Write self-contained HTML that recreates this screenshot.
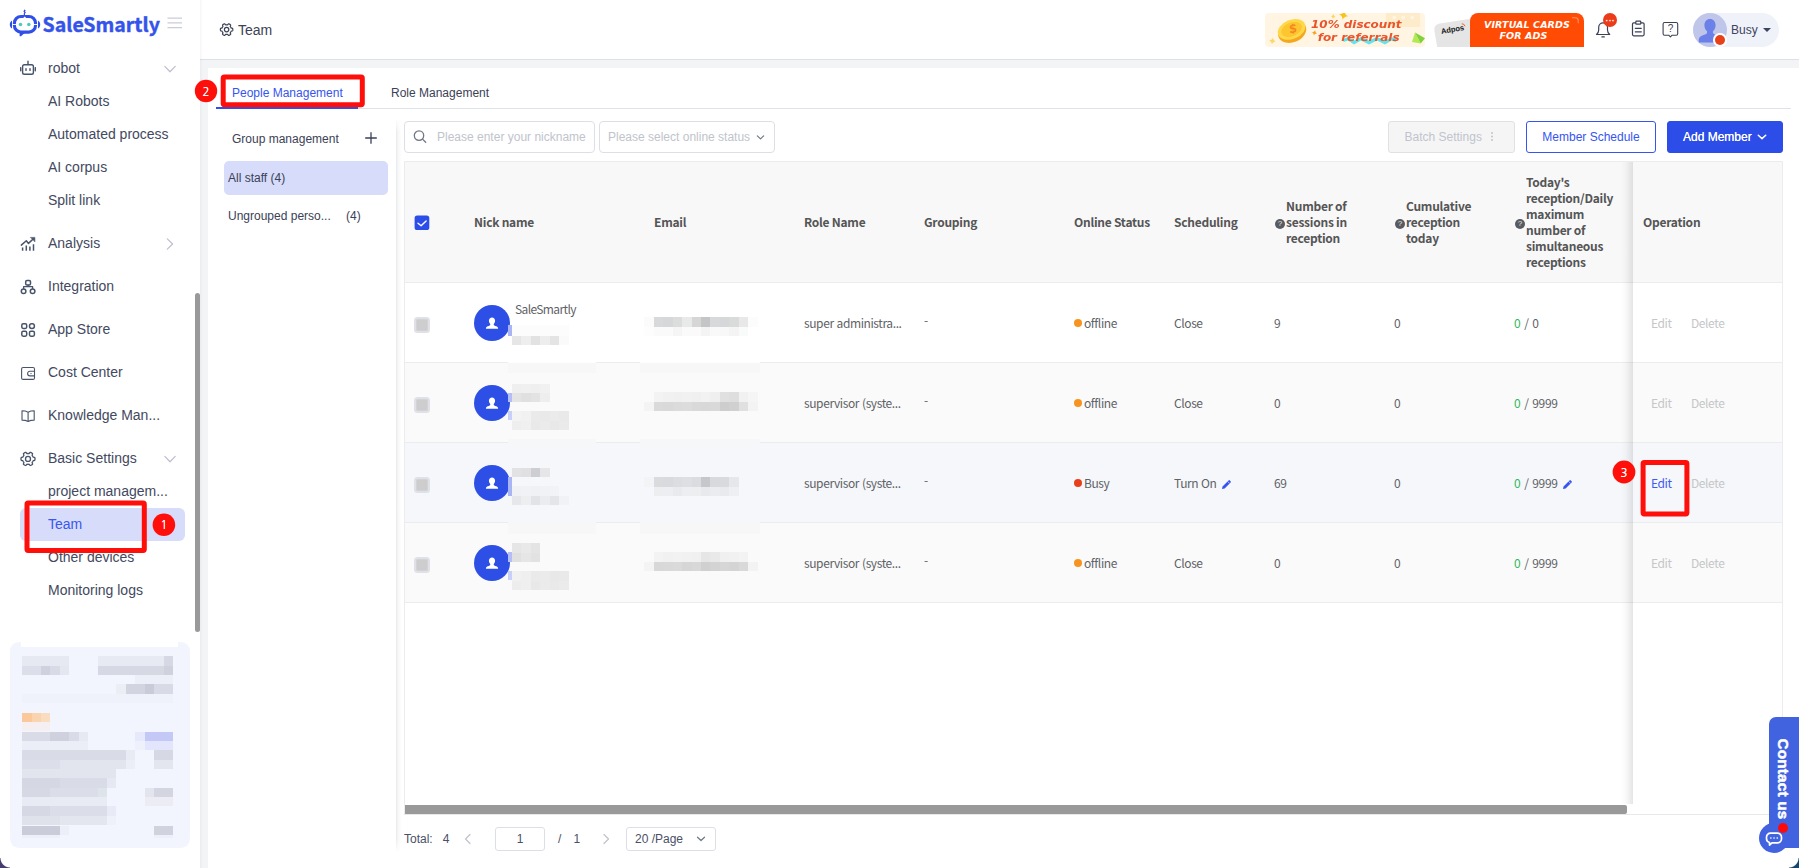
<!DOCTYPE html>
<html lang="en"><head><meta charset="utf-8"><title>Team - SaleSmartly</title>
<style>
*{box-sizing:border-box;margin:0;padding:0}
html,body{width:1799px;height:868px;overflow:hidden;background:#fff}
body{position:relative;font-family:"Liberation Sans",sans-serif;font-size:12px;color:#3b4157}
.a{position:absolute}
svg{display:block;overflow:visible}
/* ---------- sidebar ---------- */
#side{position:absolute;left:0;top:0;width:200px;height:868px;background:#fff}
#logo-t{position:absolute;left:42px;top:10px;transform:translateY(.5px);font:700 19.5px/28px "Noto Sans CJK SC","Liberation Sans",sans-serif;color:#3353ea;white-space:nowrap;-webkit-text-stroke:.4px #3353ea}
.mi{position:absolute;left:48px;height:20px;line-height:20px;font-size:14px;color:#424960;white-space:nowrap}
.ic{position:absolute;left:18px;width:20px;height:20px}
.chev{position:absolute;left:163px;width:14px;height:14px}
#act{position:absolute;left:20px;top:508px;width:165px;height:33px;border-radius:6px;background:#d6dcfa}
.num{position:absolute;width:23px;height:23px;color:#fff;font:11.5px/25.6px "NanumGothic","Liberation Sans",sans-serif;text-align:center;text-shadow:0 0 .6px #fff}
#sbar{position:absolute;left:195px;top:293px;width:5px;height:339px;border-radius:3px;background:#999}
#card{position:absolute;left:10px;top:642px;width:180px;height:206px;border-radius:9px;background:#f3f5fe;overflow:hidden}
#card i{position:absolute;display:block}
/* ---------- header ---------- */
#hdr{position:absolute;left:200px;top:0;width:1599px;height:60px;background:#fff;border-bottom:1px solid #dde0e6}
#gap{position:absolute;left:200px;top:60px;width:1599px;height:808px;background:#f3f4f6}
#gapsh{position:absolute;left:200px;top:0;width:3px;height:868px;background:linear-gradient(90deg,rgba(40,50,80,.045),rgba(40,50,80,0))}
#panel{position:absolute;left:208px;top:68px;width:1591px;height:800px;background:#fff}
#ttl{position:absolute;left:238px;top:20px;font-size:14px;line-height:20px;color:#3d4254}
/* ---------- tabs / toolbar ---------- */
.t12{position:absolute;font-size:12px;line-height:16px;white-space:nowrap}
.inp{position:absolute;height:32px;border:1px solid #dcdfe6;border-radius:4px;background:#fff}
.btn{position:absolute;top:121px;height:32px;border-radius:3px;border:1px solid;font-size:12px;line-height:30px;text-align:center;white-space:nowrap}
/* ---------- table ---------- */
#tbl{position:absolute;left:404px;top:161px;width:1379px;height:654px;background:#fff;font-family:"Noto Sans CJK SC","Liberation Sans",sans-serif;font-size:12px;color:#5a5e66}
#thead{position:absolute;left:0;top:0;width:1379px;height:122px;background:#f8f8f9;border-bottom:1px solid #ebecf0}
.th{position:absolute;font-weight:700;font-size:12px;line-height:16px;color:#555;letter-spacing:-.25px;white-space:nowrap}
.row{position:absolute;left:0;width:1379px;height:80px;border-bottom:1px solid #ebecf0}
.td{position:absolute;top:31px;font-size:12px;line-height:18px;white-space:nowrap;letter-spacing:-.4px;word-spacing:.6px;color:#606266}
.cb{position:absolute;left:10px;top:34px;width:16px;height:16px;border-radius:3.5px;background:#cdcdcd;border:2px solid #dfe1e8;box-shadow:inset 0 0 0 .6px #d6d7dc}
.av{position:absolute;left:70px;top:22px;width:36px;height:36px;border-radius:50%;background:#2d4fe6}
.dot{position:absolute;left:670px;top:36px;width:8px;height:8px;border-radius:50%}
.q{position:absolute;width:10px;height:10px;border-radius:50%;background:#595b60;color:#e4e4e6;font:400 8px/10.5px "Liberation Sans",sans-serif;text-align:center}
.mz{position:absolute}
#fix{position:absolute;left:1229px;top:0;width:149px;height:643px}
#fixsh{position:absolute;left:1217px;top:0;width:12px;height:643px;background:linear-gradient(90deg,rgba(0,0,0,0),rgba(0,0,0,.025) 40%,rgba(0,0,0,.10))}
</style>
</head><body>
<div id="gap"></div><div id="panel"></div>
<div class="a" style="left:216px;top:108px;width:1575px;height:1px;background:#dfe2e8"></div>
<div class="a" style="left:216px;top:107px;width:142px;height:2px;background:#2f4fe8"></div>
<div class="t12" style="left:232px;top:85px;color:#3555ee">People Management</div>
<div class="t12" style="left:391px;top:85px;color:#3b4157">Role Management</div>
<div class="t12" style="left:232px;top:131px;color:#3b4157">Group management</div>
<svg class="a" style="left:364px;top:131px" width="14" height="14" viewBox="0 0 14 14"><path d="M7 1.2v11.6M1.2 7h11.6" stroke="#3b4157" stroke-width="1.3" fill="none"/></svg>
<div class="a" style="left:224px;top:161px;width:164px;height:34px;border-radius:5px;background:#d6dcfa"></div>
<div class="t12" style="left:228px;top:170px;color:#3b4157">All staff (4)</div>
<div class="t12" style="left:228px;top:208px;color:#3b4157">Ungrouped perso...</div>
<div class="t12" style="left:346px;top:208px;color:#3b4157">(4)</div>
<div class="a" style="left:396px;top:118px;width:6px;height:735px;background:linear-gradient(90deg,rgba(30,40,70,.10),rgba(30,40,70,.035) 35%,rgba(30,40,70,0));-webkit-mask-image:linear-gradient(180deg,transparent,#000 14px,#000 98%,transparent);mask-image:linear-gradient(180deg,transparent,#000 14px,#000 98%,transparent)"></div>
<div class="inp" style="left:404px;top:121px;width:191px"></div>
<svg class="a" style="left:412px;top:128px" width="16" height="16" viewBox="0 0 16 16" fill="none" stroke="#6f7687" stroke-width="1.3" stroke-linecap="round"><circle cx="7" cy="7.6" r="4.7"/><path d="M10.5 11.1l3.2 3.2"/></svg>
<div class="t12" style="left:437px;top:129px;color:#c0c4cc">Please enter your nickname</div>
<div class="inp" style="left:599px;top:121px;width:176px"></div>
<div class="t12" style="left:608px;top:129px;color:#c0c4cc">Please select online status</div>
<svg class="a" style="left:755.5px;top:132.5px" width="9" height="9" viewBox="0 0 10 10" fill="none" stroke="#6f7687" stroke-width="1.3" stroke-linecap="round" stroke-linejoin="round"><path d="M1.5 3.2l3.5 3.3 3.5-3.3"/></svg>
<div class="btn" style="left:1388px;width:127px;background:#f5f5f6;border-color:#e0e1e4;color:#c0c4cc;text-align:left;padding-left:15.5px">Batch Settings</div>
<div class="a" style="left:1491px;top:131.5px;width:2px;height:2px;border-radius:1px;background:#c0c4cc;box-shadow:0 3.5px 0 #c0c4cc,0 7px 0 #c0c4cc"></div>
<div class="btn" style="left:1526px;width:130px;background:#fff;border-color:#3555ee;color:#3555ee">Member Schedule</div>
<div class="btn" style="left:1667px;width:116px;background:#2d4de8;border-color:#2d4de8;color:#fff;text-align:left;padding-left:15px;text-shadow:0 0 .4px #fff">Add Member</div>
<svg class="a" style="left:1757px;top:132px" width="10" height="10" viewBox="0 0 10 10" fill="none" stroke="#fff" stroke-width="1.5" stroke-linecap="round" stroke-linejoin="round"><path d="M1.3 3.2l3.7 3.4 3.7-3.4"/></svg><div id="hdr"></div>
<svg class="a" style="left:0;top:0" width="1799" height="60" viewBox="0 0 1799 60" fill="none" stroke="#3d4254" stroke-width="1.2" stroke-linejoin="round" stroke-linecap="round">
<path d="M233.2 30 L233.19 30.27 L233.18 30.54 L233.15 30.81 L233.11 31.08 L232.87 31.3 L232.31 31.42 L231.76 31.5 L231.51 31.64 L231.43 31.84 L231.35 32.03 L231.26 32.22 L231.16 32.4 L231.05 32.58 L230.93 32.75 L230.81 32.92 L230.68 33.09 L230.68 33.37 L230.89 33.89 L231.06 34.43 L230.99 34.75 L230.77 34.92 L230.56 35.08 L230.33 35.23 L230.1 35.37 L229.86 35.5 L229.62 35.62 L229.37 35.73 L229.12 35.83 L228.81 35.73 L228.42 35.31 L228.08 34.87 L227.83 34.73 L227.63 34.76 L227.42 34.78 L227.21 34.8 L227 34.8 L226.79 34.8 L226.58 34.78 L226.37 34.76 L226.17 34.73 L225.92 34.87 L225.58 35.31 L225.19 35.73 L224.88 35.83 L224.63 35.73 L224.38 35.62 L224.14 35.5 L223.9 35.37 L223.67 35.23 L223.44 35.08 L223.23 34.92 L223.01 34.75 L222.94 34.43 L223.11 33.89 L223.32 33.37 L223.32 33.09 L223.19 32.92 L223.07 32.75 L222.95 32.58 L222.84 32.4 L222.74 32.22 L222.65 32.03 L222.57 31.84 L222.49 31.64 L222.24 31.5 L221.69 31.42 L221.13 31.3 L220.89 31.08 L220.85 30.81 L220.82 30.54 L220.81 30.27 L220.8 30 L220.81 29.73 L220.82 29.46 L220.85 29.19 L220.89 28.92 L221.13 28.7 L221.69 28.58 L222.24 28.5 L222.49 28.36 L222.57 28.16 L222.65 27.97 L222.74 27.78 L222.84 27.6 L222.95 27.42 L223.07 27.25 L223.19 27.08 L223.32 26.91 L223.32 26.63 L223.11 26.11 L222.94 25.57 L223.01 25.25 L223.23 25.08 L223.44 24.92 L223.67 24.77 L223.9 24.63 L224.14 24.5 L224.38 24.38 L224.63 24.27 L224.88 24.17 L225.19 24.27 L225.58 24.69 L225.92 25.13 L226.17 25.27 L226.37 25.24 L226.58 25.22 L226.79 25.2 L227 25.2 L227.21 25.2 L227.42 25.22 L227.63 25.24 L227.83 25.27 L228.08 25.13 L228.42 24.69 L228.81 24.27 L229.12 24.17 L229.37 24.27 L229.62 24.38 L229.86 24.5 L230.1 24.63 L230.33 24.77 L230.56 24.92 L230.77 25.08 L230.99 25.25 L231.06 25.57 L230.89 26.11 L230.68 26.63 L230.68 26.91 L230.81 27.08 L230.93 27.25 L231.05 27.42 L231.16 27.6 L231.26 27.78 L231.35 27.97 L231.43 28.16 L231.51 28.36 L231.76 28.5 L232.31 28.58 L232.87 28.7 L233.11 28.92 L233.15 29.19 L233.18 29.46 L233.19 29.73Z" transform="translate(-.4 -.4)"/><circle cx="226.6" cy="29.6" r="2.2"/>
</svg>
<div id="ttl">Team</div>
<div class="a" style="left:1265px;top:13px;width:160px;height:34px;border-radius:4px;background:#fff5e2;overflow:hidden">
<div class="a" style="left:121px;top:0;width:34px;height:13.5px;background:#fdebc9"></div>
<svg class="a" style="left:0;top:0" width="160" height="34" viewBox="0 0 160 34">
<circle cx="129.2" cy="4.5" r="2" fill="#fff5e0"/><circle cx="138.2" cy="4.5" r="2" fill="#fff5e0"/><circle cx="147.2" cy="4.5" r="2" fill="#fff5e0"/>
<ellipse cx="27.2" cy="18.8" rx="14.6" ry="10.4" fill="#f3a81f" transform="rotate(-22 27.2 18.8)"/>
<ellipse cx="26.6" cy="16.4" rx="14.4" ry="9.6" fill="#ffd84a" transform="rotate(-22 26.6 16.4)"/>
<ellipse cx="26.6" cy="16.4" rx="10.8" ry="6.8" fill="#fdc52f" transform="rotate(-22 26.6 16.4)"/>
<path transform="rotate(12 78.6 2.3)" d="M78.6 -2.3Q79.428 1.472 83.19999999999999 2.3Q79.428 3.1279999999999997 78.6 6.8999999999999995Q77.77199999999999 3.1279999999999997 74 2.3Q77.77199999999999 1.472 78.6 -2.3Z" fill="#f9c31f"/><path transform="rotate(10 68.3 3.6)" d="M68.3 1.3000000000000003Q68.714 3.186 70.6 3.6Q68.714 4.014 68.3 5.9Q67.886 4.014 66 3.6Q67.886 3.186 68.3 1.3000000000000003Z" fill="#fbd35a"/><path transform="rotate(15 49.5 19.8)" d="M49.5 17.2Q49.968 19.332 52.1 19.8Q49.968 20.268 49.5 22.400000000000002Q49.032 20.268 46.9 19.8Q49.032 19.332 49.5 17.2Z" fill="#f9a11a"/><path transform="rotate(10 7.4 28)" d="M7.4 24.8Q7.976 27.424 10.600000000000001 28Q7.976 28.576 7.4 31.2Q6.824000000000001 28.576 4.2 28Q6.824000000000001 27.424 7.4 24.8Z" fill="#fbd668"/>
<path d="M78.5 26l4.5-2 6 3.5 7-3.5 8 3.5 8-3.5 8 3.5 6.5-3.5 4.5 2v3l-4.5-1.5-6.5 4-8-4-8 4-8-4-7 4-6-4-4.5 1.5z" fill="#5ce6f2"/>
<path d="M150 19.4l-3 9.6 8.7 1.4z" fill="#b4e855"/><path d="M150 19.4l10 5.9-4.3 5.1z" fill="#7fd23b"/>
</svg>
<div class="a" style="left:22px;top:8.5px;width:12px;text-align:center;font:italic 700 12.5px/14px 'Liberation Sans',sans-serif;color:#f5851c;transform:rotate(-14deg)">$</div>
<div class="a" style="left:46px;top:5px;width:92px;font:italic 700 9.8px/13.2px 'DejaVu Sans','Liberation Sans',sans-serif;color:#e8542c;white-space:nowrap;transform:scaleX(1.22);transform-origin:0 0"><div style="margin-left:0">10% discount</div><div style="margin-left:5.5px">for referrals</div></div>
</div>
<svg class="a" style="left:1432px;top:11px" width="154" height="38" viewBox="1432 11 154 38">
<path d="M1437.2 47l-2.8-16q-.8-6.3 5.2-7.4l31.4-4.8v28.2z" fill="#e5e5e5"/>
<path d="M1470 47v-26a8 8 0 0 1 8-8h98a8 8 0 0 1 8 8v26z" fill="#ff4b04"/>
<path d="M1572 17.8h3.4a2.8 2.8 0 0 1 2.8 2.8v2.7" fill="none" stroke="#ff9166" stroke-width="1.1"/>
<path d="M1461.8 23.8a3.2 3.2 0 0 1 3.2 2.4" fill="none" stroke="#ff5a1f" stroke-width="1"/>
</svg>
<div class="a" style="left:1440.5px;top:24.5px;font:700 7.6px/10px 'Liberation Sans',sans-serif;color:#1a1a1a;transform:rotate(-10deg);white-space:nowrap;letter-spacing:-.1px">Adpos</div>
<div class="a" style="left:1470px;top:19px;width:114px;text-align:center;font:italic 700 9.5px/11px 'DejaVu Sans','Liberation Sans',sans-serif;color:#fff;white-space:nowrap;letter-spacing:.1px">VIRTUAL CARDS<br><span style="position:relative;left:-3.5px">FOR ADS</span></div>
<svg class="a" style="left:1590px;top:10px" width="100" height="40" viewBox="1590 10 100 40" fill="none" stroke="#3b4157" stroke-width="1.2" stroke-linejoin="round" stroke-linecap="round">
<path d="M1596.5 34.5h13.2c-1.5-1.2-2.2-2.5-2.2-4.5v-2.8a4.4 4.4 0 0 0-8.8 0v2.8c0 2-.7 3.3-2.2 4.5zM1601.9 36.9h2.4"/>
<rect x="1632.5" y="22.8" width="11.6" height="13" rx="1.2"/><rect x="1635.8" y="21.2" width="5" height="3" rx=".8" fill="#fff"/><path d="M1635.3 28.3h6M1635.3 31.8h6"/>
<path d="M1664.6 22.5h11.6a1.5 1.5 0 0 1 1.5 1.5v9.8a1.5 1.5 0 0 1-1.5 1.5h-4.3l-1.5 1.5-1.5-1.5h-4.3a1.5 1.5 0 0 1-1.5-1.5v-9.8a1.5 1.5 0 0 1 1.5-1.5z" stroke-width="1.1"/>
</svg>
<div class="a" style="left:1665px;top:23px;width:11px;text-align:center;font:10px/12px 'Liberation Sans',sans-serif;color:#3b4157">?</div>
<div class="a" style="left:1603px;top:13px;width:14px;height:14px;border-radius:50%;background:#ec3b18"></div>
<div class="a" style="left:1603.2px;top:14.2px;width:14px;height:14px;text-align:center;font:700 9px/14px 'Liberation Sans',sans-serif;color:#fff;letter-spacing:.1px">···</div>
<div class="a" style="left:1693px;top:13px;width:86px;height:34px;border-radius:17px;background:#eff2f9"></div>
<div class="a" style="left:1693px;top:13px;width:34px;height:34px;border-radius:50%;background:#bfc6ea;overflow:hidden">
<svg width="34" height="34" viewBox="0 0 34 34"><path transform="translate(17 17) scale(1.12) translate(-17 -17.3)" d="M17 7.5c3 0 5 2.4 5 5.6 0 2.3-1 4.3-2.4 5.3v1.4c0 1 1.9 1.6 4.2 2.5 1.9.8 2.9 1.8 3.2 3.4v2.8h-20v-2.8c.3-1.6 1.3-2.6 3.2-3.4 2.3-.9 4.2-1.5 4.2-2.5v-1.4c-1.4-1-2.4-3-2.4-5.3 0-3.2 2-5.6 5-5.6z" fill="#6b80e8"/></svg></div>
<div class="a" style="left:1713.3px;top:33.3px;width:13.4px;height:13.4px;border-radius:50%;background:#fff"></div><div class="a" style="left:1714.8px;top:34.8px;width:10.4px;height:10.4px;border-radius:50%;background:#e8411a"></div>
<div class="a" style="left:1731px;top:22px;font:12px/16px 'Liberation Sans',sans-serif;color:#3d4460">Busy</div>
<div class="a" style="left:1763px;top:28px;width:0;height:0;border-left:4px solid transparent;border-right:4px solid transparent;border-top:4.5px solid #3d4460"></div><div id="tbl">
<div id="thead"></div>
<svg class="a" style="left:10px;top:54px" width="17" height="17" viewBox="0 0 17 17"><rect x=".6" y=".4" width="14.7" height="14.7" rx="2.6" fill="#2d4de8"/><path d="M4 8.3l3.1 2.5 5-4.8" fill="none" stroke="#fff" stroke-width="1.4" stroke-linecap="round" stroke-linejoin="round"/></svg>
<div class="th" style="left:70px;top:53px">Nick name</div>
<div class="th" style="left:250px;top:53px">Email</div>
<div class="th" style="left:400px;top:53px">Role Name</div>
<div class="th" style="left:520px;top:53px">Grouping</div>
<div class="th" style="left:670px;top:53px">Online Status</div>
<div class="th" style="left:770px;top:53px">Scheduling</div>

<div class="th" style="left:882px;top:37px">Number of<br>sessions in<br>reception</div>
<div class="th" style="left:1002px;top:37px">Cumulative<br>reception<br>today</div>
<div class="th" style="left:1122px;top:13px">Today's<br>reception/Daily<br>maximum<br>number of<br>simultaneous<br>receptions</div>
<div class="q" style="left:871px;top:58px">?</div>
<div class="q" style="left:991px;top:58px">?</div>
<div class="q" style="left:1111px;top:58px">?</div>
<div class="row" style="top:122px;background:#fff">
<div class="cb"></div>
<div class="av"><svg width="36" height="36" viewBox="0 0 36 36"><path transform="translate(18 18.3) scale(.88) translate(-18 -18.3)" d="M18 11.8c2.1 0 3.5 1.6 3.5 3.7 0 1.5-.6 2.8-1.5 3.5v.9c0 .7 1.2 1.1 2.7 1.7 1.3.5 2 1.2 2.2 2.3v.6h-13.8v-.6c.2-1.1.9-1.8 2.2-2.3 1.5-.6 2.7-1 2.7-1.7v-.9c-.9-.7-1.5-2-1.5-3.5 0-2.1 1.4-3.7 3.5-3.7z" fill="#fff"/></svg></div>
<div class="td" style="left:111px;top:17px;color:#606266;letter-spacing:-.6px">SaleSmartly</div>
<div class="td" style="left:400px">super administra...</div>
<div class="td" style="left:520px;top:28px">-</div>
<div class="dot" style="background:#f7931e"></div>
<div class="td" style="left:680px">offline</div>
<div class="td" style="left:770px">Close</div>
<div class="td" style="left:870px">9</div>
<div class="td" style="left:990px">0</div>
<div class="td" style="left:1110px"><span style="color:#2fb85f">0</span> <span style="margin:0 1px">/</span> 0</div>
</div>
<div class="row" style="top:202px;background:#fafafa">
<div class="cb"></div>
<div class="av"><svg width="36" height="36" viewBox="0 0 36 36"><path transform="translate(18 18.3) scale(.88) translate(-18 -18.3)" d="M18 11.8c2.1 0 3.5 1.6 3.5 3.7 0 1.5-.6 2.8-1.5 3.5v.9c0 .7 1.2 1.1 2.7 1.7 1.3.5 2 1.2 2.2 2.3v.6h-13.8v-.6c.2-1.1.9-1.8 2.2-2.3 1.5-.6 2.7-1 2.7-1.7v-.9c-.9-.7-1.5-2-1.5-3.5 0-2.1 1.4-3.7 3.5-3.7z" fill="#fff"/></svg></div>
<div class="td" style="left:400px">supervisor (syste...</div>
<div class="td" style="left:520px;top:28px">-</div>
<div class="dot" style="background:#f7931e"></div>
<div class="td" style="left:680px">offline</div>
<div class="td" style="left:770px">Close</div>
<div class="td" style="left:870px">0</div>
<div class="td" style="left:990px">0</div>
<div class="td" style="left:1110px"><span style="color:#2fb85f">0</span> <span style="margin:0 1px">/</span> 9999</div>
</div>
<div class="row" style="top:282px;background:#f5f7fa">
<div class="cb"></div>
<div class="av"><svg width="36" height="36" viewBox="0 0 36 36"><path transform="translate(18 18.3) scale(.88) translate(-18 -18.3)" d="M18 11.8c2.1 0 3.5 1.6 3.5 3.7 0 1.5-.6 2.8-1.5 3.5v.9c0 .7 1.2 1.1 2.7 1.7 1.3.5 2 1.2 2.2 2.3v.6h-13.8v-.6c.2-1.1.9-1.8 2.2-2.3 1.5-.6 2.7-1 2.7-1.7v-.9c-.9-.7-1.5-2-1.5-3.5 0-2.1 1.4-3.7 3.5-3.7z" fill="#fff"/></svg></div>
<div class="td" style="left:400px">supervisor (syste...</div>
<div class="td" style="left:520px;top:28px">-</div>
<div class="dot" style="background:#e8401a"></div>
<div class="td" style="left:680px">Busy</div>
<div class="td" style="left:770px">Turn On</div>
<div class="td" style="left:870px">69</div>
<div class="td" style="left:990px">0</div>
<div class="td" style="left:1110px"><span style="color:#2fb85f">0</span> <span style="margin:0 1px">/</span> 9999</div>
<svg class="a" style="left:817px;top:36px" width="11" height="11" viewBox="0 0 11 11"><path d="M1 10l.5-2.6 6-6a.9.9 0 0 1 1.3 0l.8.8a.9.9 0 0 1 0 1.3l-6 6z" fill="#3555ee"/><path d="M6.6 2.4l2 2" stroke="#f5f7fa" stroke-width=".7"/></svg>
<svg class="a" style="left:1158px;top:36px" width="11" height="11" viewBox="0 0 11 11"><path d="M1 10l.5-2.6 6-6a.9.9 0 0 1 1.3 0l.8.8a.9.9 0 0 1 0 1.3l-6 6z" fill="#3555ee"/><path d="M6.6 2.4l2 2" stroke="#f5f7fa" stroke-width=".7"/></svg>
</div>
<div class="row" style="top:362px;background:#fafafa">
<div class="cb"></div>
<div class="av"><svg width="36" height="36" viewBox="0 0 36 36"><path transform="translate(18 18.3) scale(.88) translate(-18 -18.3)" d="M18 11.8c2.1 0 3.5 1.6 3.5 3.7 0 1.5-.6 2.8-1.5 3.5v.9c0 .7 1.2 1.1 2.7 1.7 1.3.5 2 1.2 2.2 2.3v.6h-13.8v-.6c.2-1.1.9-1.8 2.2-2.3 1.5-.6 2.7-1 2.7-1.7v-.9c-.9-.7-1.5-2-1.5-3.5 0-2.1 1.4-3.7 3.5-3.7z" fill="#fff"/></svg></div>
<div class="td" style="left:400px">supervisor (syste...</div>
<div class="td" style="left:520px;top:28px">-</div>
<div class="dot" style="background:#f7931e"></div>
<div class="td" style="left:680px">offline</div>
<div class="td" style="left:770px">Close</div>
<div class="td" style="left:870px">0</div>
<div class="td" style="left:990px">0</div>
<div class="td" style="left:1110px"><span style="color:#2fb85f">0</span> <span style="margin:0 1px">/</span> 9999</div>
</div>
<div class="mz" style="left:104px;top:201px;width:88px;height:1px;background:#fefefe"></div><div class="mz" style="left:104px;top:202px;width:88px;height:9.5px;background:#f7f7f7"></div><div class="mz" style="left:104px;top:278.2px;width:88px;height:9.5px;background:#f6f7f9"></div><div class="mz" style="left:104px;top:361px;width:88px;height:1px;background:#f5f7fa"></div><div class="mz" style="left:104px;top:362px;width:88px;height:10.7px;background:#f7f7f8"></div><div class="mz" style="left:236px;top:201px;width:120px;height:1px;background:#fefefe"></div><div class="mz" style="left:236px;top:202px;width:120px;height:9.5px;background:#f7f7f7"></div><div class="mz" style="left:236px;top:278.2px;width:120px;height:9.5px;background:#f6f7f9"></div><div class="mz" style="left:236px;top:361px;width:120px;height:1px;background:#f5f7fa"></div><div class="mz" style="left:236px;top:362px;width:120px;height:10.7px;background:#f7f7f8"></div><div class="mz" style="left:104px;top:164px;width:3.7px;height:10.6px;background:#a9b4f5"></div><div class="mz" style="left:107.7px;top:164px;width:9.5px;height:10.6px;background:#fcfcfc"></div><div class="mz" style="left:117.2px;top:164px;width:9.5px;height:10.6px;background:#fcfcfc"></div><div class="mz" style="left:126.7px;top:164px;width:9.5px;height:10.6px;background:#fcfcfc"></div><div class="mz" style="left:136.2px;top:164px;width:9.5px;height:10.6px;background:#fcfcfc"></div><div class="mz" style="left:145.7px;top:164px;width:9.5px;height:10.6px;background:#fcfcfc"></div><div class="mz" style="left:155.1px;top:164px;width:9.5px;height:10.6px;background:#fcfcfc"></div><div class="mz" style="left:107.7px;top:174.6px;width:9.5px;height:9.4px;background:#e6e6e6"></div><div class="mz" style="left:117.2px;top:174.6px;width:9.5px;height:9.4px;background:#eeeeee"></div><div class="mz" style="left:126.7px;top:174.6px;width:9.5px;height:9.4px;background:#e2e2e2"></div><div class="mz" style="left:136.2px;top:174.6px;width:9.5px;height:9.4px;background:#ededed"></div><div class="mz" style="left:145.7px;top:174.6px;width:9.5px;height:9.4px;background:#e4e4e4"></div><div class="mz" style="left:155.1px;top:174.6px;width:9.5px;height:9.4px;background:#fafafa"></div><div class="mz" style="left:240px;top:156px;width:9.5px;height:9.5px;background:#fbfbfb"></div><div class="mz" style="left:249.5px;top:156px;width:9.5px;height:9.5px;background:#d8d9db"></div><div class="mz" style="left:259px;top:156px;width:9.5px;height:9.5px;background:#d6d7d9"></div><div class="mz" style="left:268.5px;top:156px;width:9.5px;height:9.5px;background:#dcdcdc"></div><div class="mz" style="left:278px;top:156px;width:9.5px;height:9.5px;background:#e8e9e9"></div><div class="mz" style="left:287.5px;top:156px;width:9.5px;height:9.5px;background:#d6d6d7"></div><div class="mz" style="left:296.9px;top:156px;width:9.5px;height:9.5px;background:#c4c5c7"></div><div class="mz" style="left:306.4px;top:156px;width:9.5px;height:9.5px;background:#d8d9db"></div><div class="mz" style="left:315.9px;top:156px;width:9.5px;height:9.5px;background:#d6d7d9"></div><div class="mz" style="left:325.4px;top:156px;width:9.5px;height:9.5px;background:#d9dbda"></div><div class="mz" style="left:334.9px;top:156px;width:9.5px;height:9.5px;background:#e8e8e8"></div><div class="mz" style="left:344.4px;top:156px;width:9.5px;height:9.5px;background:#fcfcfc"></div><div class="mz" style="left:240px;top:165.5px;width:9.5px;height:9.5px;background:#fdfdfd"></div><div class="mz" style="left:249.5px;top:165.5px;width:9.5px;height:9.5px;background:#fafafa"></div><div class="mz" style="left:259px;top:165.5px;width:9.5px;height:9.5px;background:#fafafa"></div><div class="mz" style="left:268.5px;top:165.5px;width:9.5px;height:9.5px;background:#f5f5f5"></div><div class="mz" style="left:278px;top:165.5px;width:9.5px;height:9.5px;background:#fafafa"></div><div class="mz" style="left:287.5px;top:165.5px;width:9.5px;height:9.5px;background:#fafafa"></div><div class="mz" style="left:296.9px;top:165.5px;width:9.5px;height:9.5px;background:#f4f4f4"></div><div class="mz" style="left:306.4px;top:165.5px;width:9.5px;height:9.5px;background:#f9f9f9"></div><div class="mz" style="left:315.9px;top:165.5px;width:9.5px;height:9.5px;background:#f8f8f8"></div><div class="mz" style="left:325.4px;top:165.5px;width:9.5px;height:9.5px;background:#f4f4f4"></div><div class="mz" style="left:334.9px;top:165.5px;width:9.5px;height:9.5px;background:#f9fafa"></div><div class="mz" style="left:104px;top:232px;width:3.7px;height:9px;background:#b4bdf5"></div><div class="mz" style="left:104px;top:250px;width:3.7px;height:9px;background:#c8cff8"></div><div class="mz" style="left:107.7px;top:222.5px;width:9.5px;height:9.5px;background:#efefef"></div><div class="mz" style="left:117.2px;top:222.5px;width:9.5px;height:9.5px;background:#f0f0f0"></div><div class="mz" style="left:126.7px;top:222.5px;width:9.5px;height:9.5px;background:#efefef"></div><div class="mz" style="left:136.2px;top:222.5px;width:9.5px;height:9.5px;background:#f1f1f1"></div><div class="mz" style="left:107.7px;top:232px;width:9.5px;height:9px;background:#e4e4e4"></div><div class="mz" style="left:117.2px;top:232px;width:9.5px;height:9px;background:#e0e0e0"></div><div class="mz" style="left:126.7px;top:232px;width:9.5px;height:9px;background:#e3e3e3"></div><div class="mz" style="left:136.2px;top:232px;width:9.5px;height:9px;background:#eeeeee"></div><div class="mz" style="left:107.7px;top:250px;width:9.5px;height:9.5px;background:#f3f3f3"></div><div class="mz" style="left:117.2px;top:250px;width:9.5px;height:9.5px;background:#f1f1f1"></div><div class="mz" style="left:126.7px;top:250px;width:9.5px;height:9.5px;background:#eaeaea"></div><div class="mz" style="left:136.2px;top:250px;width:9.5px;height:9.5px;background:#e9e9e9"></div><div class="mz" style="left:145.7px;top:250px;width:9.5px;height:9.5px;background:#ebebeb"></div><div class="mz" style="left:155.1px;top:250px;width:9.5px;height:9.5px;background:#e9e9e9"></div><div class="mz" style="left:107.7px;top:259.5px;width:9.5px;height:9.5px;background:#eeeeee"></div><div class="mz" style="left:117.2px;top:259.5px;width:9.5px;height:9.5px;background:#f0f0f0"></div><div class="mz" style="left:126.7px;top:259.5px;width:9.5px;height:9.5px;background:#e9e9e9"></div><div class="mz" style="left:136.2px;top:259.5px;width:9.5px;height:9.5px;background:#ebebeb"></div><div class="mz" style="left:145.7px;top:259.5px;width:9.5px;height:9.5px;background:#e8e8e8"></div><div class="mz" style="left:155.1px;top:259.5px;width:9.5px;height:9.5px;background:#eaeaea"></div><div class="mz" style="left:249.5px;top:231px;width:9.5px;height:9.5px;background:#f3f3f3"></div><div class="mz" style="left:259px;top:231px;width:9.5px;height:9.5px;background:#f1f1f1"></div><div class="mz" style="left:268.5px;top:231px;width:9.5px;height:9.5px;background:#f0f0f0"></div><div class="mz" style="left:278px;top:231px;width:9.5px;height:9.5px;background:#f1f1f1"></div><div class="mz" style="left:287.5px;top:231px;width:9.5px;height:9.5px;background:#f0f0f0"></div><div class="mz" style="left:296.9px;top:231px;width:9.5px;height:9.5px;background:#f2f2f2"></div><div class="mz" style="left:306.4px;top:231px;width:9.5px;height:9.5px;background:#efefef"></div><div class="mz" style="left:315.9px;top:231px;width:9.5px;height:9.5px;background:#e0e0e0"></div><div class="mz" style="left:325.4px;top:231px;width:9.5px;height:9.5px;background:#dedede"></div><div class="mz" style="left:334.9px;top:231px;width:9.5px;height:9.5px;background:#f1f1f1"></div><div class="mz" style="left:344.4px;top:231px;width:9.5px;height:9.5px;background:#f5f5f5"></div><div class="mz" style="left:240px;top:240.5px;width:9.5px;height:9.5px;background:#f4f4f4"></div><div class="mz" style="left:249.5px;top:240.5px;width:9.5px;height:9.5px;background:#dadada"></div><div class="mz" style="left:259px;top:240.5px;width:9.5px;height:9.5px;background:#d9d9d9"></div><div class="mz" style="left:268.5px;top:240.5px;width:9.5px;height:9.5px;background:#dbdbdb"></div><div class="mz" style="left:278px;top:240.5px;width:9.5px;height:9.5px;background:#dcdcdc"></div><div class="mz" style="left:287.5px;top:240.5px;width:9.5px;height:9.5px;background:#d9d9d9"></div><div class="mz" style="left:296.9px;top:240.5px;width:9.5px;height:9.5px;background:#d8d8d8"></div><div class="mz" style="left:306.4px;top:240.5px;width:9.5px;height:9.5px;background:#d9d9d9"></div><div class="mz" style="left:315.9px;top:240.5px;width:9.5px;height:9.5px;background:#cdcdcd"></div><div class="mz" style="left:325.4px;top:240.5px;width:9.5px;height:9.5px;background:#d0d0d0"></div><div class="mz" style="left:334.9px;top:240.5px;width:9.5px;height:9.5px;background:#e0e0e0"></div><div class="mz" style="left:344.4px;top:240.5px;width:9.5px;height:9.5px;background:#f3f3f3"></div><div class="mz" style="left:104px;top:316px;width:3.7px;height:18.5px;background:#a9b4f5"></div><div class="mz" style="left:107.7px;top:307px;width:9.5px;height:9px;background:#e2e2e5"></div><div class="mz" style="left:117.2px;top:307px;width:9.5px;height:9px;background:#e0e0e3"></div><div class="mz" style="left:126.7px;top:307px;width:9.5px;height:9px;background:#cdced2"></div><div class="mz" style="left:136.2px;top:307px;width:9.5px;height:9px;background:#e6e6e9"></div><div class="mz" style="left:107.7px;top:325px;width:9.5px;height:9.5px;background:#f0f1f4"></div><div class="mz" style="left:117.2px;top:325px;width:9.5px;height:9.5px;background:#f1f2f5"></div><div class="mz" style="left:126.7px;top:325px;width:9.5px;height:9.5px;background:#f0f1f4"></div><div class="mz" style="left:136.2px;top:325px;width:9.5px;height:9.5px;background:#f1f2f5"></div><div class="mz" style="left:145.7px;top:325px;width:9.5px;height:9.5px;background:#f2f3f6"></div><div class="mz" style="left:107.7px;top:334.5px;width:9.5px;height:9.5px;background:#e6e7ea"></div><div class="mz" style="left:117.2px;top:334.5px;width:9.5px;height:9.5px;background:#eceef0"></div><div class="mz" style="left:126.7px;top:334.5px;width:9.5px;height:9.5px;background:#e2e3e6"></div><div class="mz" style="left:136.2px;top:334.5px;width:9.5px;height:9.5px;background:#ebecef"></div><div class="mz" style="left:145.7px;top:334.5px;width:9.5px;height:9.5px;background:#e4e5e8"></div><div class="mz" style="left:155.1px;top:334.5px;width:9.5px;height:9.5px;background:#f1f2f5"></div><div class="mz" style="left:240px;top:316px;width:9.5px;height:9.5px;background:#f3f4f6"></div><div class="mz" style="left:249.5px;top:316px;width:9.5px;height:9.5px;background:#dadbde"></div><div class="mz" style="left:259px;top:316px;width:9.5px;height:9.5px;background:#d9dadd"></div><div class="mz" style="left:268.5px;top:316px;width:9.5px;height:9.5px;background:#dcdde0"></div><div class="mz" style="left:278px;top:316px;width:9.5px;height:9.5px;background:#dedfe2"></div><div class="mz" style="left:287.5px;top:316px;width:9.5px;height:9.5px;background:#dbdcdf"></div><div class="mz" style="left:296.9px;top:316px;width:9.5px;height:9.5px;background:#c6c7cb"></div><div class="mz" style="left:306.4px;top:316px;width:9.5px;height:9.5px;background:#d8d9dc"></div><div class="mz" style="left:315.9px;top:316px;width:9.5px;height:9.5px;background:#d9dadd"></div><div class="mz" style="left:325.4px;top:316px;width:9.5px;height:9.5px;background:#e6e7ea"></div><div class="mz" style="left:249.5px;top:325.5px;width:9.5px;height:9.5px;background:#eceef0"></div><div class="mz" style="left:259px;top:325.5px;width:9.5px;height:9.5px;background:#edeef1"></div><div class="mz" style="left:268.5px;top:325.5px;width:9.5px;height:9.5px;background:#e9eaed"></div><div class="mz" style="left:278px;top:325.5px;width:9.5px;height:9.5px;background:#edeef1"></div><div class="mz" style="left:287.5px;top:325.5px;width:9.5px;height:9.5px;background:#eceef0"></div><div class="mz" style="left:296.9px;top:325.5px;width:9.5px;height:9.5px;background:#e8e9ec"></div><div class="mz" style="left:306.4px;top:325.5px;width:9.5px;height:9.5px;background:#ebecef"></div><div class="mz" style="left:315.9px;top:325.5px;width:9.5px;height:9.5px;background:#e9eaed"></div><div class="mz" style="left:325.4px;top:325.5px;width:9.5px;height:9.5px;background:#eeeff2"></div><div class="mz" style="left:104px;top:391px;width:3.7px;height:9.5px;background:#b4bdf5"></div><div class="mz" style="left:104px;top:410px;width:3.7px;height:9px;background:#c8cff8"></div><div class="mz" style="left:107.7px;top:382px;width:9.5px;height:9.5px;background:#e6e6e6"></div><div class="mz" style="left:117.2px;top:382px;width:9.5px;height:9.5px;background:#e9e9e9"></div><div class="mz" style="left:126.7px;top:382px;width:9.5px;height:9.5px;background:#e4e4e4"></div><div class="mz" style="left:107.7px;top:391.5px;width:9.5px;height:9.5px;background:#e0e0e0"></div><div class="mz" style="left:117.2px;top:391.5px;width:9.5px;height:9.5px;background:#e6e6e6"></div><div class="mz" style="left:126.7px;top:391.5px;width:9.5px;height:9.5px;background:#e2e2e2"></div><div class="mz" style="left:107.7px;top:410px;width:9.5px;height:9.5px;background:#f1f1f1"></div><div class="mz" style="left:117.2px;top:410px;width:9.5px;height:9.5px;background:#efefef"></div><div class="mz" style="left:126.7px;top:410px;width:9.5px;height:9.5px;background:#eaeaea"></div><div class="mz" style="left:136.2px;top:410px;width:9.5px;height:9.5px;background:#ebebeb"></div><div class="mz" style="left:145.7px;top:410px;width:9.5px;height:9.5px;background:#e8e8e8"></div><div class="mz" style="left:155.1px;top:410px;width:9.5px;height:9.5px;background:#e9e9e9"></div><div class="mz" style="left:107.7px;top:419.5px;width:9.5px;height:9.5px;background:#ededed"></div><div class="mz" style="left:117.2px;top:419.5px;width:9.5px;height:9.5px;background:#efefef"></div><div class="mz" style="left:126.7px;top:419.5px;width:9.5px;height:9.5px;background:#e8e8e8"></div><div class="mz" style="left:136.2px;top:419.5px;width:9.5px;height:9.5px;background:#ebebeb"></div><div class="mz" style="left:145.7px;top:419.5px;width:9.5px;height:9.5px;background:#e9e9e9"></div><div class="mz" style="left:155.1px;top:419.5px;width:9.5px;height:9.5px;background:#ebebeb"></div><div class="mz" style="left:249.5px;top:391px;width:9.5px;height:9.5px;background:#f3f3f3"></div><div class="mz" style="left:259px;top:391px;width:9.5px;height:9.5px;background:#f1f1f1"></div><div class="mz" style="left:268.5px;top:391px;width:9.5px;height:9.5px;background:#f2f2f2"></div><div class="mz" style="left:278px;top:391px;width:9.5px;height:9.5px;background:#f1f1f1"></div><div class="mz" style="left:287.5px;top:391px;width:9.5px;height:9.5px;background:#f0f0f0"></div><div class="mz" style="left:296.9px;top:391px;width:9.5px;height:9.5px;background:#e6e6e6"></div><div class="mz" style="left:306.4px;top:391px;width:9.5px;height:9.5px;background:#e9e9e9"></div><div class="mz" style="left:315.9px;top:391px;width:9.5px;height:9.5px;background:#f0f0f0"></div><div class="mz" style="left:325.4px;top:391px;width:9.5px;height:9.5px;background:#f1f1f1"></div><div class="mz" style="left:334.9px;top:391px;width:9.5px;height:9.5px;background:#f3f3f3"></div><div class="mz" style="left:240px;top:400.5px;width:9.5px;height:9.5px;background:#f4f4f4"></div><div class="mz" style="left:249.5px;top:400.5px;width:9.5px;height:9.5px;background:#d8d8d8"></div><div class="mz" style="left:259px;top:400.5px;width:9.5px;height:9.5px;background:#d9d9d9"></div><div class="mz" style="left:268.5px;top:400.5px;width:9.5px;height:9.5px;background:#dadada"></div><div class="mz" style="left:278px;top:400.5px;width:9.5px;height:9.5px;background:#d6d6d6"></div><div class="mz" style="left:287.5px;top:400.5px;width:9.5px;height:9.5px;background:#d8d8d8"></div><div class="mz" style="left:296.9px;top:400.5px;width:9.5px;height:9.5px;background:#d0d0d0"></div><div class="mz" style="left:306.4px;top:400.5px;width:9.5px;height:9.5px;background:#d3d3d3"></div><div class="mz" style="left:315.9px;top:400.5px;width:9.5px;height:9.5px;background:#d6d6d6"></div><div class="mz" style="left:325.4px;top:400.5px;width:9.5px;height:9.5px;background:#d4d4d4"></div><div class="mz" style="left:334.9px;top:400.5px;width:9.5px;height:9.5px;background:#d9d9d9"></div><div class="mz" style="left:344.4px;top:400.5px;width:9.5px;height:9.5px;background:#f3f3f3"></div>
<div id="fixsh"></div>
<div id="fix">
<div class="a" style="left:0;top:0;width:149px;height:122px;background:#f8f8f9;border-bottom:1px solid #ebecf0"></div>
<div class="a" style="left:0;top:122px;width:149px;height:80px;background:#fff;border-bottom:1px solid #ebecf0"></div>
<div class="td" style="left:18px;top:153px;color:#c5c6c8">Edit</div>
<div class="td" style="left:58px;top:153px;color:#c5c6c8">Delete</div>
<div class="a" style="left:0;top:202px;width:149px;height:80px;background:#fafafa;border-bottom:1px solid #ebecf0"></div>
<div class="td" style="left:18px;top:233px;color:#c5c6c8">Edit</div>
<div class="td" style="left:58px;top:233px;color:#c5c6c8">Delete</div>
<div class="a" style="left:0;top:282px;width:149px;height:80px;background:#f5f7fa;border-bottom:1px solid #ebecf0"></div>
<div class="td" style="left:18px;top:313px;color:#3d5af1">Edit</div>
<div class="td" style="left:58px;top:313px;color:#c5c6c8">Delete</div>
<div class="a" style="left:0;top:362px;width:149px;height:80px;background:#fafafa;border-bottom:1px solid #ebecf0"></div>
<div class="td" style="left:18px;top:393px;color:#c5c6c8">Edit</div>
<div class="td" style="left:58px;top:393px;color:#c5c6c8">Delete</div>
</div>
<div class="th" style="left:1239px;top:53px">Operation</div>
<div class="a" style="left:1px;top:644px;width:1222px;height:9px;background:#999;border-radius:0 2px 2px 0"></div>
<div class="a" style="left:0;top:0;width:1379px;height:1px;background:#ebecf0"></div><div class="a" style="left:0;top:0;width:1px;height:654px;background:#ebecf0"></div><div class="a" style="left:1378px;top:0;width:1px;height:654px;background:#ebecf0"></div><div class="a" style="left:0;top:653px;width:1379px;height:1px;background:#e6e8ec"></div>
</div>
<div class="t12" style="left:404px;top:831px;color:#4a5068">Total:&nbsp;&nbsp;&nbsp;4</div>
<svg class="a" style="left:462px;top:832px" width="12" height="14" viewBox="0 0 12 14" fill="none" stroke="#c0c4cc" stroke-width="1.3" stroke-linecap="round" stroke-linejoin="round"><path d="M8 2.5l-4.5 4.5 4.5 4.5"/></svg>
<div class="a" style="left:495px;top:827px;width:50px;height:24px;border:1px solid #dcdfe6;border-radius:3px;background:#fff;font-size:12px;line-height:22px;text-align:center;color:#4a5068">1</div>
<div class="t12" style="left:558px;top:831px;color:#4a5068">/</div><div class="t12" style="left:573.5px;top:831px;color:#4a5068">1</div>
<svg class="a" style="left:600px;top:832px" width="12" height="14" viewBox="0 0 12 14" fill="none" stroke="#c0c4cc" stroke-width="1.3" stroke-linecap="round" stroke-linejoin="round"><path d="M4 2.5l4.5 4.5-4.5 4.5"/></svg>
<div class="a" style="left:626px;top:827px;width:90px;height:24px;border:1px solid #dcdfe6;border-radius:3px;background:#fff"></div>
<div class="t12" style="left:635px;top:831px;color:#4a5068">20 /Page</div>
<svg class="a" style="left:696px;top:834px" width="10" height="10" viewBox="0 0 10 10" fill="none" stroke="#6f7687" stroke-width="1.2" stroke-linecap="round" stroke-linejoin="round"><path d="M1.5 3.2l3.5 3.3 3.5-3.3"/></svg>
<div class="a" style="left:1769px;top:717px;width:40px;height:131px;border-radius:7px 0 0 0;background:#4263e0"></div>
<div class="a" style="left:1759px;top:823px;width:30px;height:30px;border-radius:50%;background:#4263e0"></div>
<div class="a" style="left:1719px;top:769px;width:128px;height:20px;transform:rotate(90deg);text-align:center;font:700 15.3px/20px 'Liberation Sans',sans-serif;color:#fff;white-space:nowrap;letter-spacing:.2px;-webkit-text-stroke:.5px #fff">Contact us</div>
<svg class="a" style="left:1764px;top:831px" width="20" height="18" viewBox="0 0 20 18" fill="none" stroke="#fff" stroke-width="1.7" stroke-linecap="round" stroke-linejoin="round"><path d="M6.5 2.2h7a4 4 0 0 1 4 4v1.6a4 4 0 0 1-4 4h-5.5l-2.5 2.2v-2.5a4 4 0 0 1-3-3.7v-1.6a4 4 0 0 1 4-4z"/><path d="M6.8 7h.1M10 7h.1M13.2 7h.1" stroke-width="1.6"/></svg>
<div class="a" style="left:1778px;top:823px;width:10px;height:10px;border-radius:50%;background:#ff0a0a"></div><div id="side">
<svg class="a" style="left:0;top:0" width="200" height="60" viewBox="0 0 200 60">
<g fill="#2f4fe8">
<path d="M24.3 9.6l1.4.6-.7 1.5 1 .9-1 .9v2h-1.2v-2.3l.5-.7-.9-.9z"/>
<rect x="14.4" y="16.5" width="21.1" height="15.6" rx="6.6" ry="6.6" fill="none" stroke="#2f4fe8" stroke-width="3.1"/>
<path d="M23.2 18.1h3l-1.5-1.6z" fill="#fff"/>
<path d="M19.6 33h5l-3.6 3.3h-1.3z"/>
<path d="M12 20.4c-1.7 1.2-2.2 2.6-2.2 4.1s.5 2.9 2.2 4.1z"/>
<path d="M38 20.4c1.7 1.2 2.2 2.6 2.2 4.1s-.5 2.9-2.2 4.1z"/>
</g>
<rect x="12" y="24" width="5" height=".9" fill="#fff"/><rect x="33" y="24" width="5" height=".9" fill="#fff"/>
<circle cx="20.5" cy="24.5" r="1.75" fill="#4fc9b8"/><circle cx="28.8" cy="24.5" r="1.75" fill="#4fc9b8"/>
<g stroke="#c9cdd8" stroke-width="1.3"><path d="M167.5 18.2h14.5M167.5 22.9h14.5M167.5 27.6h14.5"/></g>
</svg>
<svg class="a" style="left:0;top:0" width="200" height="60" viewBox="0 0 200 60"><text x="42.6" y="31.6" font-family="'Noto Sans CJK SC','Liberation Sans',sans-serif" font-weight="700" font-size="19.5" fill="#3353ea" stroke="#3353ea" stroke-width=".4">SaleSmartly</text></svg>
<div id="act"></div>
<div class="mi" style="top:58px">robot</div>
<div class="mi" style="top:91px">AI Robots</div>
<div class="mi" style="top:124px">Automated process</div>
<div class="mi" style="top:157px">AI corpus</div>
<div class="mi" style="top:190px">Split link</div>
<div class="mi" style="top:233px">Analysis</div>
<div class="mi" style="top:276px">Integration</div>
<div class="mi" style="top:319px">App Store</div>
<div class="mi" style="top:362px">Cost Center</div>
<div class="mi" style="top:405px">Knowledge Man...</div>
<div class="mi" style="top:448px">Basic Settings</div>
<div class="mi" style="top:481px">project managem...</div>
<div class="mi" style="top:514px;color:#3a57ee">Team</div>
<div class="mi" style="top:547px">Other devices</div>
<div class="mi" style="top:580px">Monitoring logs</div>
<svg class="a" style="left:0;top:0;pointer-events:none" width="200" height="640" viewBox="0 0 200 640" fill="none" stroke="#48546a" stroke-width="1.4" stroke-linecap="round" stroke-linejoin="round">
<!-- robot -->
<rect x="22.6" y="64.7" width="10.8" height="9.6" rx="1.8"/><path d="M28 61.3v3M20.7 67.6v3.2M35.3 67.6v3.2M26 68.6v1.8M30 68.6v1.8"/>
<!-- analysis -->
<path d="M22.6 247.4v3.3M26.3 245.4v5.3M29.9 246.4v4.3M33.5 244.3v6.4" stroke-width="1.5" stroke-linecap="butt"/>
<path d="M21.3 245.1l5-4.3 2.2 2.6 4.9-4.6" stroke-width="1.5"/><path d="M30.7 237.4h4.2v4.2z" fill="#48546a" stroke-width=".6"/>
<!-- integration -->
<rect x="25.7" y="280.6" width="4.8" height="4.3" rx="1.2" stroke-width="1.5"/><path d="M28.1 285v1.6M23.6 288.4v-1.8h9v1.8" stroke-width="1.3"/>
<circle cx="23.6" cy="291.2" r="2.3" stroke-width="1.5"/><circle cx="32.6" cy="291.2" r="2.3" stroke-width="1.5"/>
<!-- app store -->
<rect x="21.8" y="323.8" width="4.9" height="4.7" rx="1.4" stroke-width="1.5"/><rect x="29.5" y="323.8" width="4.9" height="4.7" rx="2.2" stroke-width="1.5"/>
<rect x="21.8" y="331.3" width="4.9" height="4.9" rx="1.4" stroke-width="1.5"/><rect x="29.5" y="331.3" width="4.9" height="4.9" rx="1.4" stroke-width="1.5"/>
<!-- cost center -->
<rect x="21.6" y="367.5" width="12.9" height="11.9" rx="1.5" stroke-width="1.1"/><path d="M34.5 371.3h-4.6a2.3 2.3 0 0 0 0 4.6h4.6" stroke-width="1.1"/><circle cx="31" cy="373.6" r=".7" fill="#48546a" stroke="none"/>
<!-- knowledge -->
<path d="M28.1 412.2c-2-1.1-4.1-1.4-6.1-1.4v9.3c2 0 4.1.3 6.1 1.4 2-1.1 4.1-1.4 6.1-1.4v-9.3c-2 0-4.1.3-6.1 1.4zM28.1 412.2v9.3" stroke-width="1.1"/>
<!-- settings -->
<path d="M35 458.9 L34.99 459.21 L34.97 459.51 L34.94 459.81 L34.89 460.12 L34.62 460.37 L33.99 460.5 L33.36 460.59 L33.07 460.75 L32.99 460.97 L32.89 461.18 L32.79 461.39 L32.68 461.6 L32.55 461.8 L32.42 462 L32.28 462.19 L32.14 462.37 L32.14 462.69 L32.38 463.28 L32.58 463.9 L32.5 464.26 L32.26 464.45 L32.02 464.63 L31.76 464.8 L31.5 464.96 L31.23 465.11 L30.96 465.24 L30.68 465.37 L30.39 465.48 L30.04 465.37 L29.6 464.89 L29.22 464.38 L28.94 464.22 L28.7 464.25 L28.47 464.28 L28.24 464.29 L28 464.3 L27.76 464.29 L27.53 464.28 L27.3 464.25 L27.06 464.22 L26.78 464.38 L26.4 464.89 L25.96 465.37 L25.61 465.48 L25.32 465.37 L25.04 465.24 L24.77 465.11 L24.5 464.96 L24.24 464.8 L23.98 464.63 L23.74 464.45 L23.5 464.26 L23.42 463.9 L23.62 463.28 L23.86 462.69 L23.86 462.37 L23.72 462.19 L23.58 462 L23.45 461.8 L23.32 461.6 L23.21 461.39 L23.11 461.18 L23.01 460.97 L22.93 460.75 L22.64 460.59 L22.01 460.5 L21.38 460.37 L21.11 460.12 L21.06 459.81 L21.03 459.51 L21.01 459.21 L21 458.9 L21.01 458.59 L21.03 458.29 L21.06 457.99 L21.11 457.68 L21.38 457.43 L22.01 457.3 L22.64 457.21 L22.93 457.05 L23.01 456.83 L23.11 456.62 L23.21 456.41 L23.32 456.2 L23.45 456 L23.58 455.8 L23.72 455.61 L23.86 455.43 L23.86 455.11 L23.62 454.52 L23.42 453.9 L23.5 453.54 L23.74 453.35 L23.98 453.17 L24.24 453 L24.5 452.84 L24.77 452.69 L25.04 452.56 L25.32 452.43 L25.61 452.32 L25.96 452.43 L26.4 452.91 L26.78 453.42 L27.06 453.58 L27.3 453.55 L27.53 453.52 L27.76 453.51 L28 453.5 L28.24 453.51 L28.47 453.52 L28.7 453.55 L28.94 453.58 L29.22 453.42 L29.6 452.91 L30.04 452.43 L30.39 452.32 L30.68 452.43 L30.96 452.56 L31.23 452.69 L31.5 452.84 L31.76 453 L32.02 453.17 L32.26 453.35 L32.5 453.54 L32.58 453.9 L32.38 454.52 L32.14 455.11 L32.14 455.43 L32.28 455.61 L32.42 455.8 L32.55 456 L32.68 456.2 L32.79 456.41 L32.89 456.62 L32.99 456.83 L33.07 457.05 L33.36 457.21 L33.99 457.3 L34.62 457.43 L34.89 457.68 L34.94 457.99 L34.97 458.29 L34.99 458.59Z" stroke-width="1.3"/><circle cx="28" cy="458.9" r="2.5" stroke-width="1.3"/>
<!-- chevrons -->
<g stroke="#bdc1ce" stroke-width="1.25"><path d="M164.8 66.4l5.2 5.4 5.2-5.4"/><path d="M167.3 238.9l5.3 5.1-5.3 5.1"/><path d="M164.8 456.4l5.2 5.4 5.2-5.4"/></g>
</svg>
<div id="sbar"></div>
<div id="card"><i style="left:11px;top:0px;width:157px;height:4.5px;background:#fff"></i><i style="left:12px;top:14px;width:47px;height:9.6px;background:#e6e8f2"></i><i style="left:88px;top:14px;width:66px;height:9.6px;background:#e8eaf3"></i><i style="left:154px;top:14px;width:9px;height:9.6px;background:#d6d8e3"></i><i style="left:12px;top:23.6px;width:19px;height:9.4px;background:#dcdeea"></i><i style="left:31px;top:23.6px;width:9px;height:9.4px;background:#cfd1de"></i><i style="left:40px;top:23.6px;width:10px;height:9.4px;background:#d8dae6"></i><i style="left:50px;top:23.6px;width:9px;height:9.4px;background:#e4e6f0"></i><i style="left:88px;top:23.6px;width:66px;height:9.4px;background:#d6d8e4"></i><i style="left:154px;top:23.6px;width:9px;height:9.4px;background:#cfd1dd"></i><i style="left:125px;top:33px;width:38px;height:9px;background:#eceef8"></i><i style="left:106px;top:42px;width:10px;height:10px;background:#eceef6"></i><i style="left:116px;top:42px;width:19px;height:10px;background:#d2d4e0"></i><i style="left:135px;top:42px;width:9px;height:10px;background:#c9cbd8"></i><i style="left:144px;top:42px;width:19px;height:10px;background:#d8dae5"></i><i style="left:12px;top:52px;width:151px;height:9px;background:#f0f2fb"></i><i style="left:12px;top:71px;width:10px;height:9px;background:#fbc89b"></i><i style="left:22px;top:71px;width:9px;height:9px;background:#f9d4ae"></i><i style="left:31px;top:71px;width:9px;height:9px;background:#fadcc0"></i><i style="left:12px;top:80px;width:28px;height:9px;background:#f6eff2"></i><i style="left:12px;top:90px;width:28px;height:9px;background:#d9dbe6"></i><i style="left:40px;top:90px;width:19px;height:9px;background:#cfd1dc"></i><i style="left:59px;top:90px;width:10px;height:9px;background:#d9dbe6"></i><i style="left:69px;top:90px;width:9px;height:9px;background:#e6e8f2"></i><i style="left:125px;top:90px;width:10px;height:9px;background:#e6e8fb"></i><i style="left:135px;top:90px;width:28px;height:9px;background:#c3c8f6"></i><i style="left:12px;top:99px;width:66px;height:9px;background:#eceef7"></i><i style="left:125px;top:99px;width:10px;height:9px;background:#eef0fc"></i><i style="left:135px;top:99px;width:28px;height:9px;background:#e2e5fb"></i><i style="left:12px;top:108px;width:104px;height:10px;background:#d9dbe6"></i><i style="left:116px;top:108px;width:9px;height:10px;background:#e8eaf4"></i><i style="left:144px;top:108px;width:19px;height:10px;background:#d6d8e3"></i><i style="left:12px;top:118px;width:38px;height:9px;background:#dcdee9"></i><i style="left:50px;top:118px;width:66px;height:9px;background:#e2e4ee"></i><i style="left:116px;top:118px;width:9px;height:9px;background:#eceef7"></i><i style="left:144px;top:118px;width:19px;height:9px;background:#e3e5ef"></i><i style="left:12px;top:127px;width:94px;height:9px;background:#e2e4ee"></i><i style="left:12px;top:136px;width:38px;height:10px;background:#d5d7e2"></i><i style="left:50px;top:136px;width:47px;height:10px;background:#d9dbe6"></i><i style="left:97px;top:136px;width:9px;height:10px;background:#e6e8f2"></i><i style="left:12px;top:146px;width:28px;height:9px;background:#d6d8e3"></i><i style="left:40px;top:146px;width:48px;height:9px;background:#dbdde8"></i><i style="left:88px;top:146px;width:9px;height:9px;background:#dde5ea"></i><i style="left:135px;top:146px;width:9px;height:9px;background:#e2e4ee"></i><i style="left:144px;top:146px;width:19px;height:9px;background:#d3d5e0"></i><i style="left:12px;top:155px;width:85px;height:9px;background:#e8eaf4"></i><i style="left:135px;top:155px;width:28px;height:9px;background:#ececf5"></i><i style="left:12px;top:164px;width:28px;height:10px;background:#d6d8e3"></i><i style="left:40px;top:164px;width:57px;height:10px;background:#dbdde8"></i><i style="left:97px;top:164px;width:9px;height:10px;background:#e8eaf6"></i><i style="left:12px;top:174px;width:38px;height:9px;background:#dfe1eb"></i><i style="left:50px;top:174px;width:47px;height:9px;background:#e3e5ef"></i><i style="left:97px;top:174px;width:9px;height:9px;background:#eef0fa"></i><i style="left:12px;top:184px;width:38px;height:9px;background:#cacdd9"></i><i style="left:50px;top:184px;width:9px;height:9px;background:#eceef8"></i><i style="left:144px;top:184px;width:19px;height:9px;background:#d0d2de"></i><i style="left:12px;top:193px;width:38px;height:3px;background:#eef0f9"></i><i style="left:144px;top:193px;width:19px;height:3px;background:#eef0f9"></i></div>
</div><svg class="a" style="left:0;top:0;pointer-events:none" width="1799" height="868" viewBox="0 0 1799 868">
<rect x="27" y="503.1" width="117.3" height="47.4" rx="1.2" fill="none" stroke="#ff0f0a" stroke-width="5" stroke-linejoin="round"/>
<rect x="223.2" y="77" width="139.1" height="27.8" rx="1.2" fill="none" stroke="#ff0f0a" stroke-width="5" stroke-linejoin="round"/>
<rect x="1643.1" y="462.5" width="43.8" height="51.5" rx="1.2" fill="none" stroke="#ff0f0a" stroke-width="5" stroke-linejoin="round"/>
<circle cx="163.9" cy="524.8" r="11.3" fill="#ff0f0a"/>
<circle cx="206" cy="91" r="11.2" fill="#ff0f0a"/>
<circle cx="1624" cy="472" r="11.4" fill="#ff0f0a"/>
</svg>
<div class="num" style="left:152.4px;top:513.3px">1</div>
<div class="num" style="left:194.5px;top:79.5px">2</div>
<div class="num" style="left:1612.5px;top:460.5px">3</div>
<div class="a" style="left:0;top:858px;width:10px;height:10px;background:radial-gradient(circle at 100% 0,rgba(70,60,110,0) 9px,#463c6e 10px)"></div>
<div class="a" style="left:1789px;top:858px;width:10px;height:10px;background:radial-gradient(circle at 0 0,rgba(20,70,110,0) 9px,#14466e 10px)"></div><div id="gapsh"></div>
</body></html>
